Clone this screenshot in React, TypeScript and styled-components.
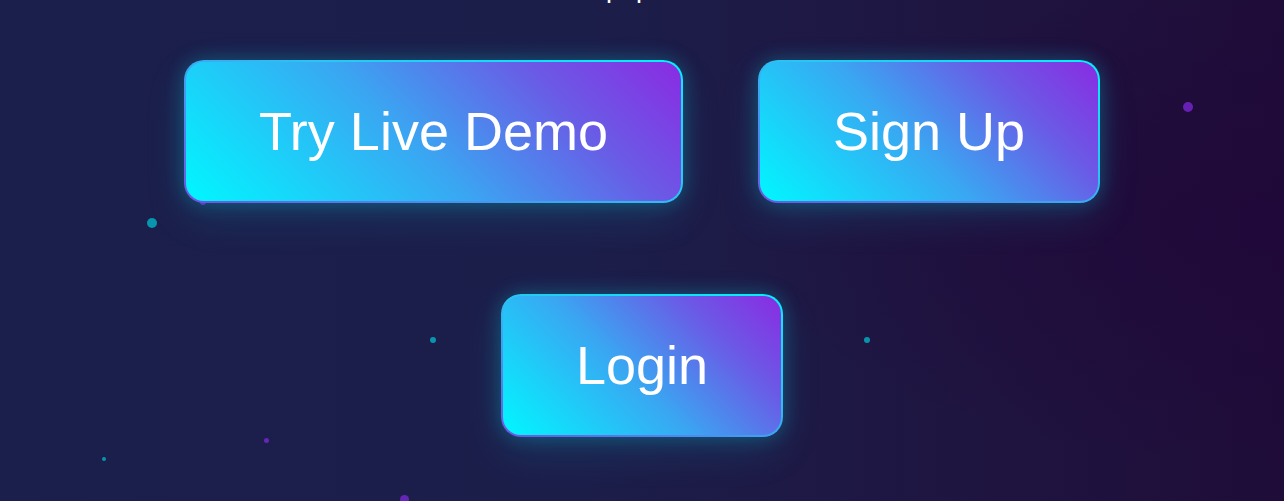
import React from "react";
import styled, { createGlobalStyle } from "styled-components";

const GlobalStyle = createGlobalStyle`
  html, body {
    margin: 0;
    padding: 0;
    height: 501px;
    overflow: hidden;
  }
  body {
    background: #1c1f4a;
    font-family: "Liberation Sans", Arial, sans-serif;
  }
`;

const Page = styled.main`
  position: relative;
  height: 501px;
  overflow: hidden;
  display: flex;
  flex-direction: column;
  align-items: center;
  background:
    radial-gradient(ellipse 60% 70% at 100% 45%, rgba(32, 8, 58, 0.85), rgba(32, 8, 58, 0) 70%),
    linear-gradient(90deg, #1b1f4b 0%, #1c1e4a 45%, #1f1541 75%, #1f0c38 100%);
`;

const Tagline = styled.p`
  margin: -27px 0 0;
  padding-left: 12px;
  font-size: 27px;
  line-height: 31px;
  color: #ffffff;
  white-space: nowrap;
  position: relative;
  z-index: 1;
`;

const ButtonRow = styled.div<{ $top: number }>`
  display: flex;
  gap: 75px;
  margin-top: ${(p) => p.$top}px;
  position: relative;
  z-index: 1;
`;

const GlowButton = styled.button`
  font-family: "Liberation Sans", Arial, sans-serif;
  font-size: 54px;
  line-height: 63px;
  color: #ffffff;
  padding: 38px 73px;
  border: 2px solid transparent;
  border-radius: 20px;
  cursor: pointer;
  white-space: nowrap;
  background:
    linear-gradient(45deg, #00f7ff 0%, #3aa6f2 45%, #6a5be6 75%, #8a2be2 100%) padding-box,
    linear-gradient(200deg, #00f2ff 0%, #27c8f4 40%, #4a8ff0 70%, #6f54e4 100%) border-box;
  box-shadow:
    0 0 20px rgba(0, 247, 255, 0.24),
    0 14px 40px rgba(0, 200, 230, 0.14);
`;

const Particle = styled.span<{ $size: number; $color: string }>`
  position: absolute;
  width: ${(p) => p.$size}px;
  height: ${(p) => p.$size}px;
  border-radius: 50%;
  background: ${(p) => p.$color};
  z-index: 0;
`;

const TEAL = "rgba(0, 200, 215, 0.7)";
const PURPLE = "rgba(125, 40, 220, 0.75)";

const particles = [
  { x: 152, y: 223, s: 10, c: TEAL },
  { x: 203, y: 202, s: 6, c: PURPLE },
  { x: 1188, y: 107, s: 10, c: PURPLE },
  { x: 433, y: 340, s: 6, c: TEAL },
  { x: 867, y: 340, s: 6, c: TEAL },
  { x: 104, y: 459, s: 4, c: TEAL },
  { x: 266, y: 440, s: 5, c: PURPLE },
  { x: 404, y: 499, s: 9, c: PURPLE },
];

export default function App() {
  return (
    <>
      <GlobalStyle />
      <Page>
        {particles.map((p, i) => (
          <Particle
            key={i}
            $size={p.s}
            $color={p.c}
            style={{ left: p.x - p.s / 2, top: p.y - p.s / 2 }}
          />
        ))}
        <Tagline>pop art</Tagline>
        <ButtonRow $top={56}>
          <GlowButton>Try Live Demo</GlowButton>
          <GlowButton>Sign Up</GlowButton>
        </ButtonRow>
        <ButtonRow $top={91}>
          <GlowButton>Login</GlowButton>
        </ButtonRow>
      </Page>
    </>
  );
}
